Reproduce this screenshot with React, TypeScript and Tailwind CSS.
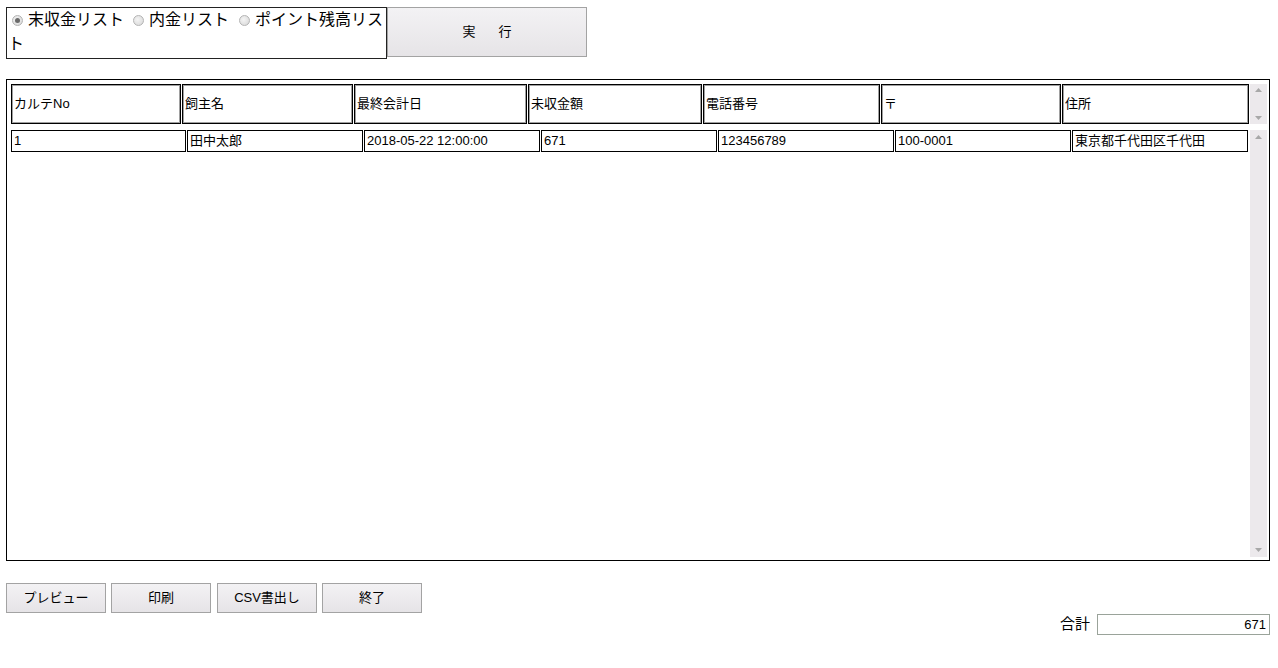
import React from "react";

const font = { fontFamily: '"Liberation Sans", "Noto Sans CJK JP", sans-serif' };

function Radio({ checked, className }: { checked?: boolean; className: string }) {
  return (
    <span
      className={
        "inline-block align-[-1px] w-[11px] h-[11px] rounded-full border border-[#b4b4b4] bg-[radial-gradient(circle_at_40%_40%,#f4f4f4,#d6d6d6)] relative " +
        className
      }
    >
      {checked && (
        <span className="absolute left-[2px] top-[2px] w-[5px] h-[5px] rounded-full bg-[#6a6a6a]" />
      )}
    </span>
  );
}

function Btn({ children, className }: { children: React.ReactNode; className: string }) {
  return (
    <div
      className={
        "flex items-center justify-center border border-[#a3a3a3] bg-[linear-gradient(#f3f2f4,#e6e4e7)] text-[13px] text-black " +
        className
      }
    >
      {children}
    </div>
  );
}

function Arrow({ up }: { up?: boolean }) {
  return (
    <svg width="7" height="4" viewBox="0 0 7 4">
      {up ? <polygon points="0,4 7,4 3.5,0" fill="#a8a8a8" /> : <polygon points="0,0 7,0 3.5,4" fill="#a8a8a8" />}
    </svg>
  );
}

const headers: [string, number][] = [
  ["カルテNo", 170],
  ["飼主名", 171],
  ["最終会計日", 173],
  ["未収金額", 174],
  ["電話番号", 177],
  ["〒", 180],
  ["住所", 187],
];

const row: [string, number][] = [
  ["1", 175],
  ["田中太郎", 176],
  ["2018-05-22 12:00:00", 176],
  ["671", 176],
  ["123456789", 176],
  ["100-0001", 176],
  ["東京都千代田区千代田", 176],
];

export default function App() {
  return (
    <div className="w-[1278px] h-[668px] bg-white text-black overflow-hidden" style={font}>
      <div className="flex pt-[7px] pl-[6px]">
        <div className="w-[381px] h-[52px] border border-[#222] pt-[1px] text-[16px] leading-[22px]">
          <div className="flex items-center h-[22px]">
            <Radio checked className="ml-[5px] mr-[5px]" />
            <span>末収金リスト</span>
            <Radio className="ml-[9px] mr-[5px]" />
            <span>内金リスト</span>
            <Radio className="ml-[10px] mr-[5px]" />
            <span className="whitespace-nowrap">ポイント残高リス</span>
          </div>
          <div className="h-[22px] pl-[1px] pt-[2px]">ト</div>
        </div>
        <Btn className="w-[200px] h-[50px] gap-[23px]">
          <span>実</span>
          <span>行</span>
        </Btn>
      </div>

      <div className="ml-[6px] mt-[20px] w-[1264px] h-[482px] border border-black pt-[4px] pl-[4px] pr-[2px] pb-[3px] flex flex-col">
        <div className="flex h-[40px]">
          <div className="flex gap-[1px]">
            {headers.map(([t, w]) => (
              <div
                key={t}
                style={{ width: w }}
                className="h-[40px] border border-black shadow-[inset_0_0_0_1px_#a0a0a0] flex items-center pl-[2px] text-[13px]"
              >
                {t}
              </div>
            ))}
          </div>
          <div className="ml-[1px] w-[17px] h-[40px] bg-[#ece9ec] flex flex-col items-center justify-between py-[4px]">
            <Arrow up />
            <Arrow />
          </div>
        </div>
        <div className="flex flex-1 mt-[6px]">
          <div className="flex gap-[1px] h-[22px]">
            {row.map(([t, w], i) => (
              <div
                key={i}
                style={{ width: w }}
                className="h-[22px] border border-black flex items-center pl-[2px] text-[13px]"
              >
                {t}
              </div>
            ))}
          </div>
          <div className="ml-[2px] w-[17px] bg-[#ece9ec] flex flex-col items-center justify-between py-[5px]">
            <Arrow up />
            <Arrow />
          </div>
        </div>
      </div>

      <div className="flex mt-[22px] ml-[6px]">
        <Btn className="w-[100px] h-[30px]">プレビュー</Btn>
        <Btn className="w-[100px] h-[30px] ml-[5px]">印刷</Btn>
        <Btn className="w-[100px] h-[30px] ml-[6px]">CSV書出し</Btn>
        <Btn className="w-[100px] h-[30px] ml-[5px]">終了</Btn>
      </div>

      <div className="flex justify-end items-center mt-0 pr-[8px]">
        <span className="text-[15px] mr-[7px]">合計</span>
        <div className="w-[173px] h-[21px] border border-[#9aa39a] flex items-center justify-end pr-[3px] text-[13px]">
          671
        </div>
      </div>
    </div>
  );
}
